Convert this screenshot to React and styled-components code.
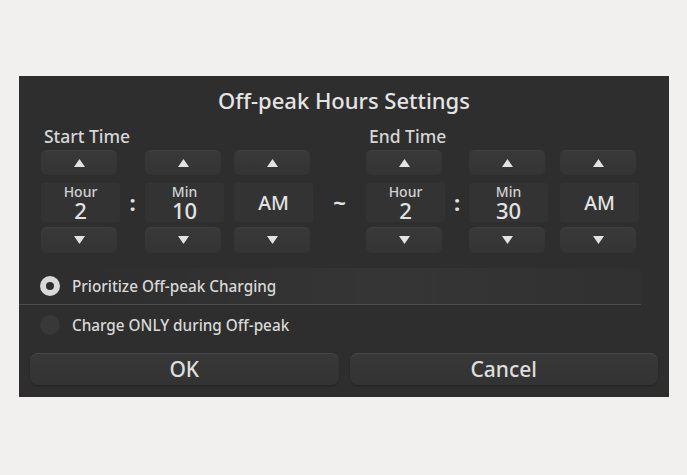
import styled, { createGlobalStyle } from "styled-components";

const GlobalStyle = createGlobalStyle`
    body {
        margin: 0;
        background: #f1f0ee;
        font-family: "Noto Sans", "Open Sans", sans-serif;
    }
`;

function Arrow({ down }) {
    return (
        <svg width="11" height="8" viewBox="0 0 11 8">
            <polygon
                points={down ? "0,0 11,0 5.5,8" : "0,8 11,8 5.5,0"}
                fill="#e2e2e2"
            />
        </svg>
    );
}

function Spinner({ label, value }) {
    return (
        <SpinnerColumn>
            <ArrowButton><Arrow /></ArrowButton>
            <ValueBox>
                {label && <small>{label}</small>}
                <span className={label ? "" : "big"}>{value}</span>
            </ValueBox>
            <ArrowButton><Arrow down /></ArrowButton>
        </SpinnerColumn>
    );
}

function TimeGroup({ title, hour, min, colon, gap }) {
    return (
        <Group>
            <GroupLabel>{title}</GroupLabel>
            <Spinners>
                <Spinner label="Hour" value={hour} />
                <Colon $width={colon}>:</Colon>
                <Spinner label="Min" value={min} />
                <Spacer $width={gap} />
                <Spinner value="AM" />
            </Spinners>
        </Group>
    );
}

function App() {
    return (
        <Page>
            <GlobalStyle />
            <Panel>
                <Title>Off-peak Hours Settings</Title>
                <TimeRow>
                    <TimeGroup title="Start Time" hour="2" min="10" colon={25} gap={10} />
                    <Tilde>~</Tilde>
                    <TimeGroup title="End Time" hour="2" min="30" colon={24} gap={12} />
                </TimeRow>
                <Options>
                    <Option $active>
                        <Radio $checked />
                        Prioritize Off-peak Charging
                    </Option>
                    <Option>
                        <Radio />
                        Charge ONLY during Off-peak
                    </Option>
                </Options>
                <Buttons>
                    <Button>OK</Button>
                    <Button>Cancel</Button>
                </Buttons>
            </Panel>
        </Page>
    );
}

const Page = styled.div`
    padding: 76px 18px 78px 19px;
`;

const Panel = styled.div`
    display: flex;
    flex-direction: column;
    width: 650px;
    height: 321px;
    box-sizing: border-box;
    padding-top: 11px;

    background: #2e2e2e;
    color: #dcdcdc;
    font-weight: 500;
`;

const Title = styled.div`
    text-align: center;
    font-size: 22px;
    line-height: 26px;
    color: #e4e4e4;
`;

const TimeRow = styled.div`
    display: flex;
    align-items: flex-end;
    margin-top: 13px;
    padding-left: 22px;
`;

const Group = styled.div`
    display: flex;
    flex-direction: column;
`;

const GroupLabel = styled.div`
    padding-left: 3px;
    margin-bottom: 4px;

    font-size: 17.5px;
    line-height: 20px;
    color: #d6d6d6;
`;

const Spinners = styled.div`
    display: flex;
    align-items: center;
`;

const SpinnerColumn = styled.div`
    display: flex;
    flex-direction: column;
    width: 79px;
`;

const ArrowButton = styled.div`
    display: flex;
    justify-content: center;
    align-items: center;

    width: 76px;
    height: 25px;
    border-radius: 6px;

    background: linear-gradient(#393939, #343434);
    box-shadow: inset 0 1px 0 rgba(255, 255, 255, 0.04);

    &:last-child {
        height: 26px;
        margin-top: 5px;
    }
`;

const ValueBox = styled.div`
    display: flex;
    flex-direction: column;
    justify-content: center;
    align-items: center;

    height: 39px;
    margin-top: 8px;
    border-radius: 3px;

    background: #333333;
    color: #e2e2e2;

    small {
        font-size: 14px;
        line-height: 15px;
        color: #d2d2d2;
    }

    span {
        font-size: 22px;
        line-height: 22px;
    }

    span.big {
        font-size: 19.5px;
    }
`;

const Colon = styled.div`
    width: ${(p) => p.$width}px;
    text-align: center;
    font-size: 22px;
    font-weight: bold;
    color: #e2e2e2;
`;

const Spacer = styled.div`
    width: ${(p) => p.$width}px;
`;

const Tilde = styled.div`
    width: 53px;
    height: 103px;
    display: flex;
    align-items: center;
    justify-content: center;

    font-size: 22px;
    font-weight: bold;
    color: #e2e2e2;
`;

const Options = styled.div`
    display: flex;
    flex-direction: column;
    margin-top: 15px;
`;

const Option = styled.div`
    display: flex;
    align-items: center;
    gap: 12px;

    height: ${(p) => (p.$active ? "36px" : "40px")};
    padding-left: 21px;
    margin-right: 28px;

    font-size: 15.3px;
    color: #d8d8d8;

    ${(p) =>
        p.$active &&
        `
        border-bottom: 1px solid #4e4e4e;
        background: linear-gradient(90deg, rgba(255,255,255,0) 10%, rgba(255,255,255,0.035) 60%, rgba(255,255,255,0.01));
    `}
`;

const Radio = styled.div`
    width: 20px;
    height: 20px;
    box-sizing: border-box;
    border-radius: 50%;

    background: ${(p) => (p.$checked ? "#2e2e2e" : "#383838")};
    border: ${(p) => (p.$checked ? "6px solid #d9d9d9" : "none")};
`;

const Buttons = styled.div`
    display: flex;
    gap: 11px;
    margin-top: 8px;
    padding: 0 11px;
`;

const Button = styled.div`
    flex: 1;
    display: flex;
    justify-content: center;
    align-items: center;

    height: 32px;
    border-radius: 8px;

    background: linear-gradient(#383838, #333333);
    box-shadow: inset 0 1px 0 rgba(255, 255, 255, 0.08), 0 1px 2px rgba(0, 0, 0, 0.3);

    font-size: 21px;
    color: #dedede;
`;

export default App;
